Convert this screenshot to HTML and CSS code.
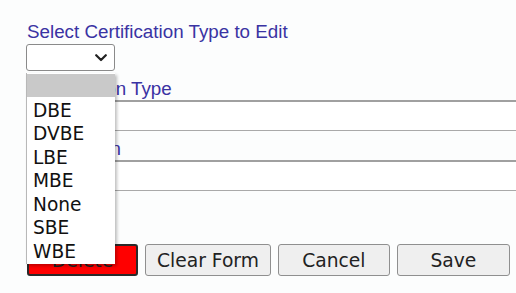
FILE: index.html
```html
<!DOCTYPE html>
<html lang="en">
<head>
    <meta charset="UTF-8">
    <meta name="viewport" content="width=device-width, initial-scale=1.0">
    <title>Edit Certification Type</title>
    <link rel="stylesheet" href="styles.css">
</head>
<body>

    <form class="cert-form">
        <label class="field-label first" for="certSelect">Select Certification Type to Edit</label>
        <div class="select-wrap">
            <select id="certSelect" class="cert-select">
                <option value="" selected></option>
                <option>DBE</option>
                <option>DVBE</option>
                <option>LBE</option>
                <option>MBE</option>
                <option>None</option>
                <option>SBE</option>
                <option>WBE</option>
            </select>
            <svg class="chevron" width="12" height="8" viewBox="0 0 12 8">
                <path d="M1.2 1.2 L6 6 L10.8 1.2" fill="none" stroke="#222" stroke-width="2.2" stroke-linecap="round" stroke-linejoin="round"/>
            </svg>
            <!-- open list of the select -->
            <ul class="dropdown">
                <li class="active">&nbsp;</li>
                <li>DBE</li>
                <li>DVBE</li>
                <li>LBE</li>
                <li>MBE</li>
                <li>None</li>
                <li>SBE</li>
                <li>WBE</li>
            </ul>
        </div>

        <label class="field-label" for="typeInput">Certification Type</label>
        <input type="text" id="typeInput" class="text-input">

        <label class="field-label" for="descInput">Description</label>
        <input type="text" id="descInput" class="text-input">

        <div class="actions">
            <button type="button" class="btn btn-delete">Delete</button>
            <button type="button" class="btn btn-clear">Clear Form</button>
            <button type="button" class="btn">Cancel</button>
            <button type="button" class="btn btn-save">Save</button>
        </div>
    </form>

</body>
</html>
```

FILE: styles.css
```css
html {
    overflow: hidden;
}
body {
    margin: 0;
    padding: 21px 0 0 26px;
    background: #fcfdfd;
    font-family: "Liberation Sans", Arial, sans-serif;
}
.cert-form {
    width: 530px;
}
.field-label {
    display: block;
    margin: 7px 0 1px 1px;
    font-size: 18.8px;
    line-height: 21px;
    color: #3a33a3;
}
.field-label.first {
    margin-top: 0;
    margin-bottom: 2px;
}
.select-wrap {
    position: relative;
    width: 89px;
    height: 27px;
}
.cert-select {
    appearance: none;
    width: 89px;
    height: 27px;
    margin: 0;
    border: 1px solid #8a8a8a;
    border-radius: 3px;
    background: #fff;
}
.chevron {
    position: absolute;
    left: 69px;
    top: 10px;
    pointer-events: none;
}
.dropdown {
    position: absolute;
    top: 29px;
    left: 0;
    width: 89px;
    margin: 0;
    padding: 1px 0 0;
    list-style: none;
    background: #fff;
    border-left: 1px solid #b8b8b8;
    box-sizing: border-box;
    box-shadow: 2px 2px 3px rgba(0, 0, 0, 0.25);
    font-family: "DejaVu Sans", Verdana, sans-serif;
    font-size: 18.6px;
    z-index: 2;
}
.dropdown li {
    height: 23.6px;
    line-height: 23.6px;
    padding-left: 6px;
    color: #111;
}
.dropdown li.active {
    height: 22.5px;
    margin-bottom: 2px;
    background: #c9c9c9;
}
.text-input {
    display: block;
    width: 520px;
    height: 31px;
    margin: 0;
    box-sizing: border-box;
    border: 1px solid #a9a9a9;
    border-top: 2px solid #a0a0a0;
    background: #fff;
}
.actions {
    display: flex;
    gap: 7px;
    margin-top: 53px;
    margin-left: 1px;
}
.btn {
    min-width: 112px;
    height: 32px;
    padding: 0 11px;
    font-family: "DejaVu Sans", Verdana, sans-serif;
    font-size: 18.7px;
    color: #222;
    background: #efefef;
    border: 1px solid #8f8f8f;
    border-radius: 3px;
}
.btn-delete {
    min-width: 111px;
    background: #ff0000;
    border: 2px solid #2a2a2a;
}
.btn-save {
    min-width: 113px;
}
```
